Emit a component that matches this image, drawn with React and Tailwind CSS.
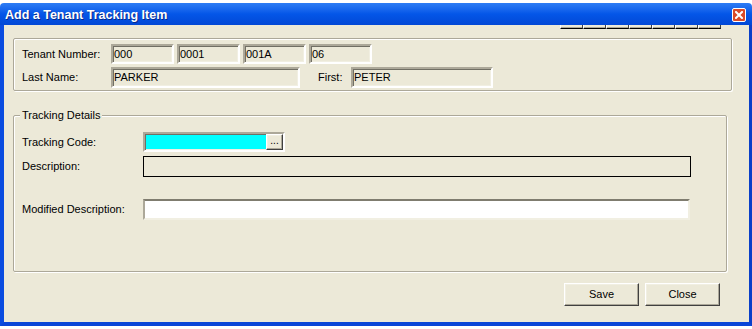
import React from "react";

const sunken =
  "border-2 border-t-[#ACA899] border-l-[#ACA899] border-r-white border-b-white shadow-[inset_1px_1px_0_#716F64,inset_-1px_-1px_0_#F1EFE2]";
const raised =
  "border border-t-white border-l-white border-r-[#404040] border-b-[#404040] shadow-[inset_-1px_-1px_0_#ACA899,inset_1px_1px_0_#F1EFE2]";
const etched =
  "border border-[#ACA899] shadow-[inset_1px_1px_0_#fff,1px_1px_0_#fff] rounded-[2px]";

function Field({ w, text, extra = "", h = "h-[20px]" }) {
  return (
    <div className={`${sunken} ${w} ${h} bg-[#ECE9D8] flex items-center pl-[1px] text-[11px] text-black leading-none ${extra}`}>
      {text}
    </div>
  );
}

export default function App() {
  return (
    <div
      className="w-[752px] h-[329px] bg-white flex flex-col overflow-hidden text-black"
      style={{ fontFamily: '"Liberation Sans", Arial, sans-serif' }}
    >
      <div className="h-[3px] bg-white" />
      {/* Title bar */}
      <div className="h-[22px] flex items-center justify-between pl-[5px] pr-[6px] bg-linear-to-b from-[#2E7CF4] via-[#0456E8] to-[#0248D6] rounded-t-[4px]">
        <span className="text-white font-bold text-[12.5px] leading-none pt-[2px] [text-shadow:1px_1px_0_#0A2A8A]">
          Add a Tenant Tracking Item
        </span>
        <div className="w-[14px] h-[14px] mt-[2px] rounded-[2px] border border-white bg-[#DA4A28] flex items-center justify-center">
          <svg width="8" height="8" viewBox="0 0 8 8">
            <path d="M1 1 L7 7 M7 1 L1 7" stroke="white" strokeWidth="2" strokeLinecap="square" />
          </svg>
        </div>
      </div>
      {/* Window body */}
      <div className="h-[301px] border-l-4 border-r-[3px] border-b-4 border-l-[#0A4CE0] border-r-[#0A3FC8] border-b-[#0A46D8] bg-[#ECE9D8] flex flex-col">
        {/* partially hidden toolbar buttons */}
        <div className="flex h-[4px] ml-[556px] w-[161px]">
          {Array.from({ length: 7 }).map((_, i) => (
            <div
              key={i}
              className="flex-1 bg-[#ECE9D8] border-b border-b-black border-r border-r-[#404040] border-l border-l-white shadow-[inset_0_-1px_0_#ACA899]"
            />
          ))}
        </div>

        {/* Tenant group */}
        <div className={`${etched} mt-[9px] ml-[9px] w-[719px] h-[53px] pl-[8px] pt-[5px] flex flex-col gap-[3px]`}>
          <div className="flex items-center">
            <div className="w-[89px] text-[11px] leading-none">Tenant Number:</div>
            <div className="flex gap-[3px]">
              <Field w="w-[63px]" text="000" />
              <Field w="w-[63px]" text="0001" />
              <Field w="w-[63px]" text="001A" />
              <Field w="w-[63px]" text="06" />
            </div>
          </div>
          <div className="flex items-center">
            <div className="w-[89px] text-[11px] leading-none">Last Name:</div>
            <Field w="w-[189px]" h="h-[21px]" text="PARKER" />
            <div className="w-[33px] ml-[18px] text-[11px] leading-none">First:</div>
            <Field w="w-[142px]" h="h-[21px]" text="PETER" />
          </div>
        </div>

        {/* Tracking group */}
        <div className={`${etched} relative mt-[24px] ml-[9px] w-[714px] h-[157px] pl-[8px] pt-[16px] flex flex-col`}>
          <span className="absolute -top-[7px] left-[6px] px-[2px] bg-[#ECE9D8] text-[11px] leading-[13px]">
            Tracking Details
          </span>
          <div className="flex items-center">
            <div className="w-[121px] text-[11px] leading-none">Tracking Code:</div>
            <div className={`${sunken} w-[142px] h-[20px] bg-[#00FFFF] flex justify-end`}>
              <div className={`${raised} w-[17px] h-full bg-[#ECE9D8] flex items-end justify-center pb-[3px] text-[10px] leading-none`}>
                ...
              </div>
            </div>
          </div>
          <div className="flex items-center mt-[4px]">
            <div className="w-[121px] text-[11px] leading-none">Description:</div>
            <div className="w-[548px] h-[21px] border border-black bg-[#ECE9D8]" />
          </div>
          <div className="flex items-center mt-[22px]">
            <div className="w-[121px] text-[11px] leading-none">Modified Description:</div>
            <div className="w-[547px] h-[21px] border-2 border-t-[#7F7C6F] border-l-[#ACA899] border-r-[#F1EFE2] border-b-[#F1EFE2] bg-white" />
          </div>
        </div>

        {/* Buttons */}
        <div className="flex justify-end gap-[6px] mt-[11px] pr-[29px]">
          <button className={`${raised} w-[75px] h-[23px] bg-[#ECE9D8] text-[11px] leading-none flex items-center justify-center`}>
            Save
          </button>
          <button className={`${raised} w-[75px] h-[23px] bg-[#ECE9D8] text-[11px] leading-none flex items-center justify-center`}>
            Close
          </button>
        </div>
      </div>
      <div className="flex-1 bg-white" />
    </div>
  );
}
